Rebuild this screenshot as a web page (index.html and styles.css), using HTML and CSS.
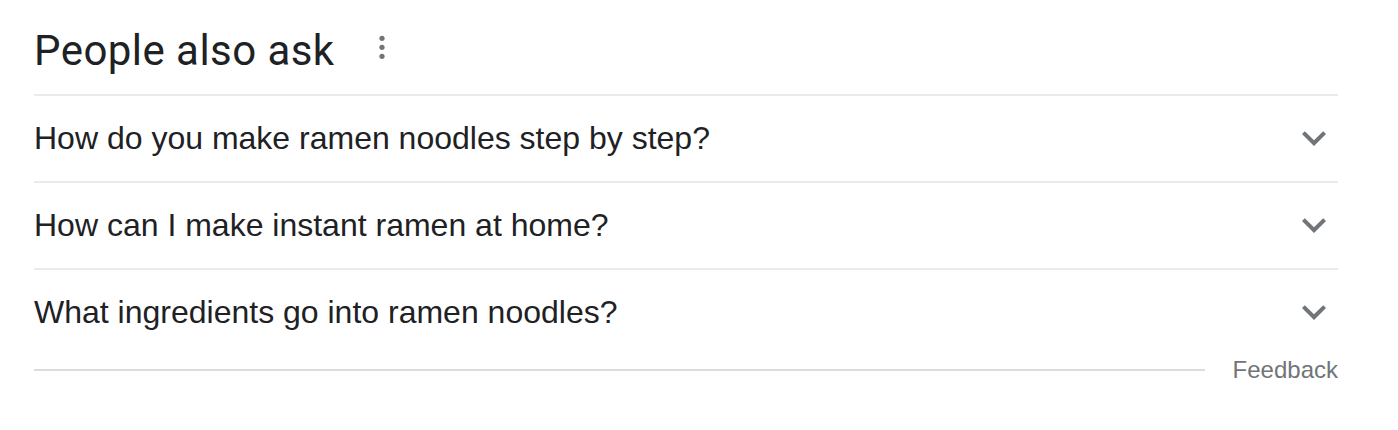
FILE: index.html
```html
<!DOCTYPE html>
<html>
<head>
<meta charset="utf-8">
<link rel="stylesheet" href="styles.css">
</head>
<body>
<div class="paa">
  <div class="paa-header">
    <h2 class="paa-title">People also ask</h2>
    <svg class="more" width="10" height="48" viewBox="0 0 10 48"><circle cx="5" cy="11.3" r="2.6"/><circle cx="5" cy="20.3" r="2.6"/><circle cx="5" cy="29.3" r="2.6"/></svg>
  </div>
  <div class="paa-list">
    <div class="q">
      <span class="q-text">How do you make ramen noodles step by step?</span>
      <svg class="chev" width="48" height="48" viewBox="0 0 24 24"><path d="M16.59 8.59L12 13.17 7.41 8.59 6 10l6 6 6-6z"/></svg>
    </div>
    <div class="q">
      <span class="q-text">How can I make instant ramen at home?</span>
      <svg class="chev" width="48" height="48" viewBox="0 0 24 24"><path d="M16.59 8.59L12 13.17 7.41 8.59 6 10l6 6 6-6z"/></svg>
    </div>
    <div class="q last">
      <span class="q-text">What ingredients go into ramen noodles?</span>
      <svg class="chev" width="48" height="48" viewBox="0 0 24 24"><path d="M16.59 8.59L12 13.17 7.41 8.59 6 10l6 6 6-6z"/></svg>
    </div>
  </div>
  <div class="feedback-row">
    <div class="feedback-line"></div>
    <span class="feedback">Feedback</span>
  </div>
</div>
</body>
</html>
```

FILE: styles.css
```css
html, body {
  margin: 0;
  padding: 0;
  background: #fff;
}
.paa {
  margin-left: 34px;
  width: 1304px;
  padding-top: 27px;
  font-family: "Liberation Sans", Arial, sans-serif;
  color: #202124;
}
.paa-header {
  display: flex;
  align-items: flex-start;
  height: 48px;
  margin-bottom: 19px;
}
.paa-title {
  margin: 0;
  font-family: Roboto, "Liberation Sans", sans-serif;
  font-weight: 400;
  font-size: 42px;
  line-height: 48px;
  letter-spacing: 0.45px;
  color: #202124;
}
.more {
  display: block;
  margin-left: 42px;
  fill: #70757a;
}
.paa-list {
  border-top: 2px solid #ebebeb;
}
.q {
  display: flex;
  align-items: center;
  justify-content: space-between;
  height: 83px;
  padding-bottom: 2px;
  border-bottom: 2px solid #ebebeb;
}
.q.last {
  border-bottom: none;
}
.q-text {
  font-size: 32px;
  line-height: 40px;
}
.chev {
  display: block;
  fill: #70757a;
}
.feedback-row {
  display: flex;
  align-items: center;
  height: 30px;
}
.feedback-line {
  flex: 1;
  height: 2px;
  background: #dadce0;
  margin-right: 28px;
}
.feedback {
  font-size: 24px;
  line-height: 30px;
  color: #70757a;
}
```
